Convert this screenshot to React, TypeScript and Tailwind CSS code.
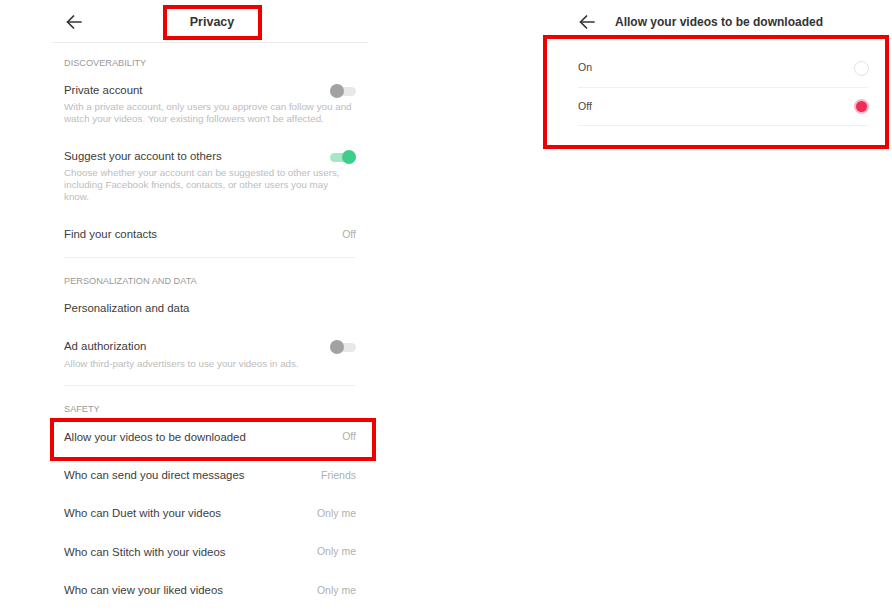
import React from 'react';

const font = { fontFamily: '"Liberation Sans", Arial, sans-serif' };

function BackArrow() {
  return (
    <svg width="16" height="14" viewBox="0 0 16 14" fill="none" stroke="#333" strokeWidth="1.7" strokeLinecap="round" strokeLinejoin="round">
      <line x1="1.5" y1="7" x2="15" y2="7" />
      <polyline points="7.5,1 1.5,7 7.5,13" />
    </svg>
  );
}

function Toggle({ on }: { on?: boolean }) {
  return (
    <div className="relative w-[26px] h-[14px] flex items-center">
      <div className={`w-[26px] h-[9px] rounded-full ${on ? 'bg-[#a8e6c8]' : 'bg-[#e8e8e8]'}`} />
      <div
        className={`absolute top-0 w-[14px] h-[14px] rounded-full ${on ? 'right-0 bg-[#3fcd8c]' : 'left-0 bg-[#a2a2a2]'}`}
      />
    </div>
  );
}

function SectionLabel({ children, className = '' }: { children: React.ReactNode; className?: string }) {
  return <div className={`text-[9.2px] leading-[12px] text-[#9a9a9a] ${className}`}>{children}</div>;
}

function Row({ label, value, boxed }: { label: string; value: string; boxed?: boolean }) {
  return (
    <div className="relative h-[38.4px] flex items-center justify-between">
      <span className="text-[11.4px] text-[#3c3c3c]">{label}</span>
      <span className="text-[10.5px] text-[#b0b0b0]">{value}</span>
      {boxed && <div className="absolute left-[-14px] right-[-20px] top-0 h-[43px] border-[4px] border-[#ee0000]" />}
    </div>
  );
}

export default function App() {
  return (
    <div className="w-[892px] h-[612px] bg-white flex overflow-hidden" style={font}>
      {/* Privacy screen */}
      <div className="ml-[52px] w-[316px] flex flex-col">
        <div className="relative h-[43px] pt-[3px] border-b border-[#ececec] flex items-center justify-center">
          <div className="absolute left-[14px] top-[15px]">
            <BackArrow />
          </div>
          <div className="ml-[4px] w-[99px] h-[35px] border-[4px] border-[#ee0000] flex items-center justify-center">
            <span className="text-[12.5px] font-bold text-[#333]">Privacy</span>
          </div>
        </div>

        <div className="px-[12px] flex flex-col">
          <div className="h-[40px] flex items-center">
            <SectionLabel>DISCOVERABILITY</SectionLabel>
          </div>

          <div className="h-[16px] flex items-center justify-between">
            <span className="text-[11.4px] text-[#3c3c3c]">Private account</span>
            <Toggle />
          </div>
          <p className="mt-[2px] text-[9.8px] leading-[12px] text-[#bdbdbd]">
            With a private account, only users you approve can follow you and watch your videos. Your existing followers won't be affected.
          </p>

          <div className="mt-[24px] h-[16px] flex items-center justify-between">
            <span className="text-[11.4px] text-[#3c3c3c]">Suggest your account to others</span>
            <Toggle on />
          </div>
          <p className="mt-[2px] text-[9.8px] leading-[12px] text-[#bdbdbd] pr-[10px]">
            Choose whether your account can be suggested to other users, including Facebook friends, contacts, or other users you may know.
          </p>

          <div className="mt-[24px] h-[16px] flex items-center justify-between">
            <span className="text-[11.4px] text-[#3c3c3c]">Find your contacts</span>
            <span className="text-[10.5px] text-[#b0b0b0]">Off</span>
          </div>
          <div className="mt-[14px] border-t border-[#f0f0f0]" />

          <SectionLabel className="mt-[17px]">PERSONALIZATION AND DATA</SectionLabel>

          <div className="mt-[14px] h-[16px] flex items-center">
            <span className="text-[11.4px] text-[#3c3c3c]">Personalization and data</span>
          </div>

          <div className="mt-[22px] h-[16px] flex items-center justify-between">
            <span className="text-[11.4px] text-[#3c3c3c]">Ad authorization</span>
            <Toggle />
          </div>
          <p className="mt-[3px] text-[9.8px] leading-[12px] text-[#bdbdbd]">
            Allow third-party advertisers to use your videos in ads.
          </p>
          <div className="mt-[15px] border-t border-[#f0f0f0]" />

          <SectionLabel className="mt-[17px]">SAFETY</SectionLabel>

          <div className="mt-[3px] flex flex-col">
            <Row label="Allow your videos to be downloaded" value="Off" boxed />
            <Row label="Who can send you direct messages" value="Friends" />
            <Row label="Who can Duet with your videos" value="Only me" />
            <Row label="Who can Stitch with your videos" value="Only me" />
            <Row label="Who can view your liked videos" value="Only me" />
          </div>
        </div>
      </div>

      {/* Download setting screen */}
      <div className="ml-[198px] w-[314px] flex flex-col">
        <div className="h-[35px] flex items-center pt-[9px] pl-[13px] gap-[20px]">
          <BackArrow />
          <span className="text-[12px] font-bold text-[#333]">Allow your videos to be downloaded</span>
        </div>
        <div className="relative px-[12px] pt-[14px]">
          <div className="h-[39px] flex items-center justify-between border-b border-[#f0f0f0]">
            <span className="text-[10.5px] text-[#444]">On</span>
            <div className="mr-[-1px] w-[15px] h-[15px] rounded-full border border-[#e2e2e2] bg-white" />
          </div>
          <div className="h-[38px] flex items-center justify-between border-b border-[#f0f0f0]">
            <span className="text-[10.5px] text-[#444]">Off</span>
            <div className="mr-[-1px] w-[15px] h-[15px] rounded-full bg-[#f7b9c6] flex items-center justify-center">
              <div className="w-[11px] h-[11px] rounded-full bg-[#ee2c55]" />
            </div>
          </div>
          <div className="absolute left-[-23px] right-[-9px] top-0 h-[114px] border-[4px] border-[#ee0000]" />
        </div>
      </div>
    </div>
  );
}
